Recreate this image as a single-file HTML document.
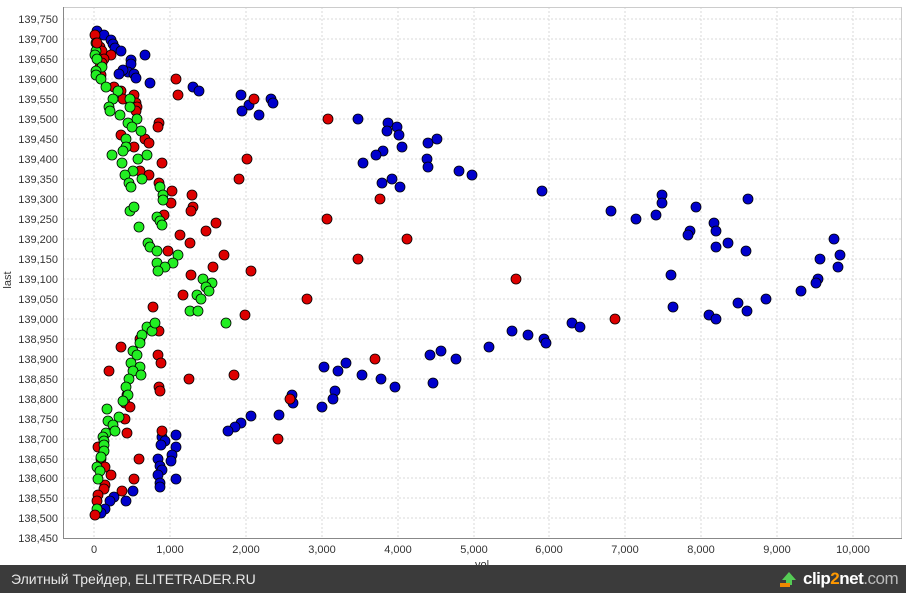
<!DOCTYPE html>
<html><head><meta charset="utf-8"><style>
body{margin:0;width:906px;height:593px;overflow:hidden;background:#fff;font-family:"Liberation Sans",sans-serif}
#f{position:absolute;left:0;top:565px;width:906px;height:28px;background:#3b3b3b;color:#e8e8e8;font-size:14px;line-height:28px}
</style></head><body>
<svg width="906" height="593" style="position:absolute;left:0;top:0" font-family="Liberation Sans, sans-serif" font-size="11" fill="#333">
<g stroke="#d8d8d8" stroke-dasharray="2,2" stroke-width="1">
<line x1="94" y1="7" x2="94" y2="538"/><line x1="170" y1="7" x2="170" y2="538"/><line x1="246" y1="7" x2="246" y2="538"/><line x1="322" y1="7" x2="322" y2="538"/><line x1="398" y1="7" x2="398" y2="538"/><line x1="474" y1="7" x2="474" y2="538"/><line x1="549" y1="7" x2="549" y2="538"/><line x1="625" y1="7" x2="625" y2="538"/><line x1="701" y1="7" x2="701" y2="538"/><line x1="777" y1="7" x2="777" y2="538"/><line x1="853" y1="7" x2="853" y2="538"/>
<line x1="63" y1="19" x2="901" y2="19"/><line x1="63" y1="39" x2="901" y2="39"/><line x1="63" y1="59" x2="901" y2="59"/><line x1="63" y1="79" x2="901" y2="79"/><line x1="63" y1="99" x2="901" y2="99"/><line x1="63" y1="119" x2="901" y2="119"/><line x1="63" y1="139" x2="901" y2="139"/><line x1="63" y1="159" x2="901" y2="159"/><line x1="63" y1="179" x2="901" y2="179"/><line x1="63" y1="199" x2="901" y2="199"/><line x1="63" y1="219" x2="901" y2="219"/><line x1="63" y1="239" x2="901" y2="239"/><line x1="63" y1="259" x2="901" y2="259"/><line x1="63" y1="279" x2="901" y2="279"/><line x1="63" y1="299" x2="901" y2="299"/><line x1="63" y1="319" x2="901" y2="319"/><line x1="63" y1="339" x2="901" y2="339"/><line x1="63" y1="359" x2="901" y2="359"/><line x1="63" y1="379" x2="901" y2="379"/><line x1="63" y1="399" x2="901" y2="399"/><line x1="63" y1="419" x2="901" y2="419"/><line x1="63" y1="439" x2="901" y2="439"/><line x1="63" y1="459" x2="901" y2="459"/><line x1="63" y1="478" x2="901" y2="478"/><line x1="63" y1="498" x2="901" y2="498"/><line x1="63" y1="518" x2="901" y2="518"/>
</g>
<rect x="63.5" y="7.5" width="838" height="531" fill="none" stroke="#ccc"/>
<line x1="63.5" y1="7" x2="63.5" y2="539" stroke="#888"/><line x1="63" y1="538.5" x2="902" y2="538.5" stroke="#888"/>
<g text-anchor="end">
<text x="58" y="23">139,750</text><text x="58" y="43">139,700</text><text x="58" y="63">139,650</text><text x="58" y="83">139,600</text><text x="58" y="103">139,550</text><text x="58" y="123">139,500</text><text x="58" y="143">139,450</text><text x="58" y="163">139,400</text><text x="58" y="183">139,350</text><text x="58" y="203">139,300</text><text x="58" y="223">139,250</text><text x="58" y="243">139,200</text><text x="58" y="263">139,150</text><text x="58" y="283">139,100</text><text x="58" y="303">139,050</text><text x="58" y="323">139,000</text><text x="58" y="343">138,950</text><text x="58" y="363">138,900</text><text x="58" y="383">138,850</text><text x="58" y="403">138,800</text><text x="58" y="423">138,750</text><text x="58" y="443">138,700</text><text x="58" y="463">138,650</text><text x="58" y="482">138,600</text><text x="58" y="502">138,550</text><text x="58" y="522">138,500</text><text x="58" y="542">138,450</text>
</g>
<g text-anchor="middle">
<text x="94" y="553">0</text><text x="170" y="553">1,000</text><text x="246" y="553">2,000</text><text x="322" y="553">3,000</text><text x="398" y="553">4,000</text><text x="474" y="553">5,000</text><text x="549" y="553">6,000</text><text x="625" y="553">7,000</text><text x="701" y="553">8,000</text><text x="777" y="553">9,000</text><text x="853" y="553">10,000</text>
<text x="482" y="568">vol</text>
</g>
<text x="11" y="280" transform="rotate(-90 11 280)" text-anchor="middle">last</text>
<g fill="#0000cc" stroke="#000" stroke-width="0.8">
<circle cx="97" cy="31" r="5"/><circle cx="104" cy="35" r="5"/><circle cx="111" cy="40" r="5"/><circle cx="113" cy="44" r="5"/><circle cx="115" cy="48" r="5"/><circle cx="121" cy="51" r="5"/><circle cx="131" cy="60" r="5"/><circle cx="131" cy="64" r="5"/><circle cx="128" cy="72" r="5"/><circle cx="123" cy="70" r="5"/><circle cx="119" cy="74" r="5"/><circle cx="134" cy="74" r="5"/><circle cx="136" cy="78" r="5"/><circle cx="145" cy="55" r="5"/><circle cx="150" cy="83" r="5"/><circle cx="193" cy="87" r="5"/><circle cx="199" cy="91" r="5"/><circle cx="241" cy="95" r="5"/><circle cx="249" cy="105" r="5"/><circle cx="242" cy="111" r="5"/><circle cx="259" cy="115" r="5"/><circle cx="271" cy="99" r="5"/><circle cx="273" cy="103" r="5"/><circle cx="358" cy="119" r="5"/><circle cx="388" cy="123" r="5"/><circle cx="387" cy="131" r="5"/><circle cx="397" cy="127" r="5"/><circle cx="399" cy="135" r="5"/><circle cx="402" cy="147" r="5"/><circle cx="383" cy="151" r="5"/><circle cx="376" cy="155" r="5"/><circle cx="363" cy="163" r="5"/><circle cx="428" cy="143" r="5"/><circle cx="437" cy="139" r="5"/><circle cx="427" cy="159" r="5"/><circle cx="428" cy="167" r="5"/><circle cx="459" cy="171" r="5"/><circle cx="472" cy="175" r="5"/><circle cx="382" cy="183" r="5"/><circle cx="392" cy="179" r="5"/><circle cx="400" cy="187" r="5"/><circle cx="542" cy="191" r="5"/><circle cx="662" cy="195" r="5"/><circle cx="662" cy="203" r="5"/><circle cx="611" cy="211" r="5"/><circle cx="636" cy="219" r="5"/><circle cx="656" cy="215" r="5"/><circle cx="696" cy="207" r="5"/><circle cx="748" cy="199" r="5"/><circle cx="714" cy="223" r="5"/><circle cx="716" cy="231" r="5"/><circle cx="690" cy="231" r="5"/><circle cx="688" cy="235" r="5"/><circle cx="716" cy="247" r="5"/><circle cx="728" cy="243" r="5"/><circle cx="746" cy="251" r="5"/><circle cx="834" cy="239" r="5"/><circle cx="840" cy="255" r="5"/><circle cx="820" cy="259" r="5"/><circle cx="838" cy="267" r="5"/><circle cx="671" cy="275" r="5"/><circle cx="818" cy="279" r="5"/><circle cx="816" cy="283" r="5"/><circle cx="801" cy="291" r="5"/><circle cx="766" cy="299" r="5"/><circle cx="738" cy="303" r="5"/><circle cx="747" cy="311" r="5"/><circle cx="673" cy="307" r="5"/><circle cx="709" cy="315" r="5"/><circle cx="716" cy="319" r="5"/><circle cx="572" cy="323" r="5"/><circle cx="580" cy="327" r="5"/><circle cx="512" cy="331" r="5"/><circle cx="528" cy="335" r="5"/><circle cx="544" cy="339" r="5"/><circle cx="546" cy="343" r="5"/><circle cx="489" cy="347" r="5"/><circle cx="441" cy="351" r="5"/><circle cx="430" cy="355" r="5"/><circle cx="456" cy="359" r="5"/><circle cx="433" cy="383" r="5"/><circle cx="346" cy="363" r="5"/><circle cx="324" cy="367" r="5"/><circle cx="338" cy="371" r="5"/><circle cx="362" cy="375" r="5"/><circle cx="381" cy="379" r="5"/><circle cx="395" cy="387" r="5"/><circle cx="335" cy="391" r="5"/><circle cx="292" cy="395" r="5"/><circle cx="333" cy="399" r="5"/><circle cx="322" cy="407" r="5"/><circle cx="293" cy="403" r="5"/><circle cx="279" cy="415" r="5"/><circle cx="251" cy="416" r="5"/><circle cx="241" cy="423" r="5"/><circle cx="235" cy="427" r="5"/><circle cx="228" cy="431" r="5"/><circle cx="162" cy="437" r="5"/><circle cx="176" cy="435" r="5"/><circle cx="165" cy="441" r="5"/><circle cx="161" cy="445" r="5"/><circle cx="176" cy="447" r="5"/><circle cx="172" cy="455" r="5"/><circle cx="158" cy="459" r="5"/><circle cx="171" cy="461" r="5"/><circle cx="160" cy="466" r="5"/><circle cx="162" cy="470" r="5"/><circle cx="176" cy="479" r="5"/><circle cx="158" cy="475" r="5"/><circle cx="160" cy="483" r="5"/><circle cx="160" cy="487" r="5"/><circle cx="133" cy="491" r="5"/><circle cx="114" cy="497" r="5"/><circle cx="110" cy="501" r="5"/><circle cx="126" cy="501" r="5"/><circle cx="105" cy="509" r="5"/><circle cx="101" cy="513" r="5"/>
</g>
<g fill="#dd0000" stroke="#000" stroke-width="0.8">
<circle cx="95" cy="35" r="5"/><circle cx="100" cy="47" r="5"/><circle cx="102" cy="51" r="5"/><circle cx="111" cy="55" r="5"/><circle cx="104" cy="59" r="5"/><circle cx="102" cy="63" r="5"/><circle cx="100" cy="67" r="5"/><circle cx="101" cy="75" r="5"/><circle cx="176" cy="79" r="5"/><circle cx="178" cy="95" r="5"/><circle cx="254" cy="99" r="5"/><circle cx="114" cy="87" r="5"/><circle cx="121" cy="91" r="5"/><circle cx="134" cy="95" r="5"/><circle cx="123" cy="99" r="5"/><circle cx="136" cy="103" r="5"/><circle cx="137" cy="107" r="5"/><circle cx="136" cy="111" r="5"/><circle cx="328" cy="119" r="5"/><circle cx="159" cy="123" r="5"/><circle cx="158" cy="127" r="5"/><circle cx="121" cy="135" r="5"/><circle cx="145" cy="139" r="5"/><circle cx="149" cy="143" r="5"/><circle cx="134" cy="147" r="5"/><circle cx="247" cy="159" r="5"/><circle cx="162" cy="163" r="5"/><circle cx="140" cy="171" r="5"/><circle cx="149" cy="175" r="5"/><circle cx="239" cy="179" r="5"/><circle cx="159" cy="183" r="5"/><circle cx="172" cy="191" r="5"/><circle cx="192" cy="195" r="5"/><circle cx="171" cy="203" r="5"/><circle cx="380" cy="199" r="5"/><circle cx="193" cy="207" r="5"/><circle cx="191" cy="211" r="5"/><circle cx="164" cy="215" r="5"/><circle cx="327" cy="219" r="5"/><circle cx="216" cy="223" r="5"/><circle cx="180" cy="235" r="5"/><circle cx="206" cy="231" r="5"/><circle cx="407" cy="239" r="5"/><circle cx="190" cy="243" r="5"/><circle cx="168" cy="251" r="5"/><circle cx="224" cy="255" r="5"/><circle cx="213" cy="267" r="5"/><circle cx="358" cy="259" r="5"/><circle cx="251" cy="271" r="5"/><circle cx="191" cy="275" r="5"/><circle cx="183" cy="295" r="5"/><circle cx="516" cy="279" r="5"/><circle cx="307" cy="299" r="5"/><circle cx="153" cy="307" r="5"/><circle cx="245" cy="315" r="5"/><circle cx="615" cy="319" r="5"/><circle cx="140" cy="339" r="5"/><circle cx="159" cy="331" r="5"/><circle cx="121" cy="347" r="5"/><circle cx="158" cy="355" r="5"/><circle cx="161" cy="363" r="5"/><circle cx="234" cy="375" r="5"/><circle cx="375" cy="359" r="5"/><circle cx="109" cy="371" r="5"/><circle cx="189" cy="379" r="5"/><circle cx="159" cy="387" r="5"/><circle cx="160" cy="391" r="5"/><circle cx="127" cy="395" r="5"/><circle cx="125" cy="403" r="5"/><circle cx="130" cy="407" r="5"/><circle cx="290" cy="399" r="5"/><circle cx="125" cy="419" r="5"/><circle cx="127" cy="433" r="5"/><circle cx="162" cy="431" r="5"/><circle cx="278" cy="439" r="5"/><circle cx="98" cy="447" r="5"/><circle cx="101" cy="459" r="5"/><circle cx="105" cy="467" r="5"/><circle cx="111" cy="475" r="5"/><circle cx="139" cy="459" r="5"/><circle cx="134" cy="479" r="5"/><circle cx="105" cy="485" r="5"/><circle cx="104" cy="489" r="5"/><circle cx="98" cy="495" r="5"/><circle cx="97" cy="501" r="5"/><circle cx="122" cy="491" r="5"/>
</g>
<g fill="#22ee22" stroke="#000" stroke-width="0.8">
<circle cx="96" cy="43" r="5"/><circle cx="96" cy="51" r="5"/><circle cx="95" cy="55" r="5"/><circle cx="97" cy="59" r="5"/><circle cx="102" cy="67" r="5"/><circle cx="96" cy="71" r="5"/><circle cx="96" cy="75" r="5"/><circle cx="101" cy="79" r="5"/><circle cx="106" cy="87" r="5"/><circle cx="118" cy="91" r="5"/><circle cx="113" cy="99" r="5"/><circle cx="130" cy="99" r="5"/><circle cx="109" cy="107" r="5"/><circle cx="110" cy="111" r="5"/><circle cx="120" cy="115" r="5"/><circle cx="130" cy="107" r="5"/><circle cx="137" cy="119" r="5"/><circle cx="128" cy="123" r="5"/><circle cx="132" cy="127" r="5"/><circle cx="141" cy="131" r="5"/><circle cx="126" cy="139" r="5"/><circle cx="126" cy="147" r="5"/><circle cx="123" cy="151" r="5"/><circle cx="112" cy="155" r="5"/><circle cx="138" cy="159" r="5"/><circle cx="147" cy="155" r="5"/><circle cx="122" cy="163" r="5"/><circle cx="133" cy="171" r="5"/><circle cx="125" cy="175" r="5"/><circle cx="142" cy="179" r="5"/><circle cx="129" cy="183" r="5"/><circle cx="131" cy="187" r="5"/><circle cx="160" cy="187" r="5"/><circle cx="163" cy="195" r="5"/><circle cx="163" cy="200" r="5"/><circle cx="157" cy="217" r="5"/><circle cx="160" cy="221" r="5"/><circle cx="162" cy="225" r="5"/><circle cx="139" cy="227" r="5"/><circle cx="148" cy="243" r="5"/><circle cx="150" cy="247" r="5"/><circle cx="157" cy="251" r="5"/><circle cx="178" cy="255" r="5"/><circle cx="130" cy="211" r="5"/><circle cx="134" cy="207" r="5"/><circle cx="157" cy="263" r="5"/><circle cx="173" cy="263" r="5"/><circle cx="165" cy="267" r="5"/><circle cx="158" cy="271" r="5"/><circle cx="203" cy="279" r="5"/><circle cx="212" cy="283" r="5"/><circle cx="206" cy="287" r="5"/><circle cx="197" cy="295" r="5"/><circle cx="209" cy="291" r="5"/><circle cx="201" cy="299" r="5"/><circle cx="190" cy="311" r="5"/><circle cx="198" cy="311" r="5"/><circle cx="226" cy="323" r="5"/><circle cx="147" cy="327" r="5"/><circle cx="142" cy="335" r="5"/><circle cx="152" cy="331" r="5"/><circle cx="155" cy="323" r="5"/><circle cx="140" cy="343" r="5"/><circle cx="133" cy="351" r="5"/><circle cx="137" cy="355" r="5"/><circle cx="131" cy="363" r="5"/><circle cx="140" cy="367" r="5"/><circle cx="133" cy="371" r="5"/><circle cx="141" cy="375" r="5"/><circle cx="129" cy="379" r="5"/><circle cx="126" cy="387" r="5"/><circle cx="128" cy="395" r="5"/><circle cx="123" cy="401" r="5"/><circle cx="119" cy="417" r="5"/><circle cx="107" cy="409" r="5"/><circle cx="108" cy="421" r="5"/><circle cx="113" cy="425" r="5"/><circle cx="106" cy="433" r="5"/><circle cx="115" cy="431" r="5"/><circle cx="103" cy="437" r="5"/><circle cx="104" cy="441" r="5"/><circle cx="104" cy="445" r="5"/><circle cx="104" cy="451" r="5"/><circle cx="101" cy="457" r="5"/><circle cx="97" cy="467" r="5"/><circle cx="100" cy="471" r="5"/><circle cx="98" cy="479" r="5"/><circle cx="97" cy="509" r="5"/>
</g>
<g fill="#dd0000" stroke="#000" stroke-width="0.8"><circle cx="95" cy="515" r="5"/><circle cx="97" cy="43" r="5"/></g>
</svg>
<div id="f"><span style="position:absolute;left:11px">Элитный Трейдер, ELITETRADER.RU</span>
<span style="position:absolute;left:782px;top:7px;width:0;height:0;border-left:7px solid transparent;border-right:7px solid transparent;border-bottom:8px solid #5c5"></span>
<span style="position:absolute;left:786px;top:14px;width:6px;height:6px;background:#5c5"></span>
<span style="position:absolute;left:780px;top:18px;width:10px;height:4px;background:#e80"></span>
<span style="position:absolute;left:803px;top:0;font-size:17px;font-weight:bold;color:#fff;letter-spacing:-0.5px">clip<span style="color:#f90">2</span>net<span style="color:#bbb;font-weight:normal">.com</span></span>
</div>
</body></html>
